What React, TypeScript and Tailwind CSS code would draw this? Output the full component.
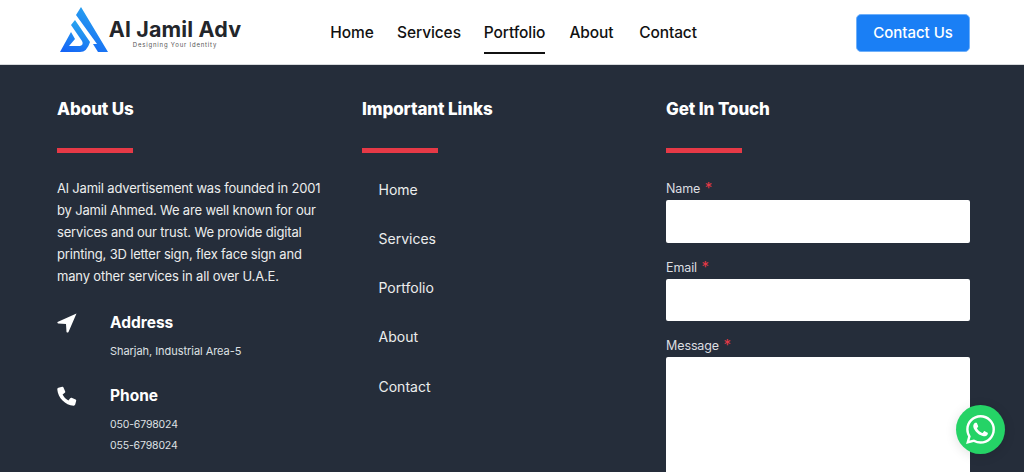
import React from "react";

const head = "font-['Inter',sans-serif] font-extrabold text-[17px] tracking-[-0.1px] leading-[24px] text-white";
const body = "font-['Inter',sans-serif]";

function Logo() {
  return (
    <svg width="60" height="56" viewBox="0 0 60 56" className="shrink-0">
      <defs>
        <linearGradient id="lg" x1="0.6" y1="0" x2="0.2" y2="1">
          <stop offset="0" stopColor="#2aa8ee" />
          <stop offset="1" stopColor="#1464f6" />
        </linearGradient>
      </defs>
      <g fill="url(#lg)">
        <path d="M26 3 L53 48 H43 L38 40 H42 L21 11 Z" />
        <path d="M20 16 L35 38 Q32 48 25 48 H5 L16 28 L20 35 L14 42 H25 Q29 41 27 37 L16 21 Z" />
      </g>
    </svg>
  );
}

function Header() {
  const items = [
    { t: "Home", w: "w-[44px]" },
    { t: "Services", w: "w-[62px]" },
    { t: "Portfolio", w: "w-[61px]" },
    { t: "About", w: "w-[45px]" },
    { t: "Contact", w: "w-[60px]" },
  ];
  return (
    <header className="h-[65px] bg-white border-b border-[#d8dadd] flex items-start pl-[55px] pr-[54px]">
      <div className="w-[275px] flex items-start">
        <div className="mt-[4px] w-[54px]"><Logo /></div>
        <div className="flex flex-col items-center mt-[17px] w-[132px]">
          <span className="font-['Inter',sans-serif] font-bold text-[21.5px] leading-[24px] text-[#23262b] tracking-[0.15px] whitespace-nowrap">Al Jamil Adv</span>
          <span className="font-['Inter',sans-serif] text-[6px] leading-[8px] tracking-[0.8px] text-[#555] whitespace-nowrap">Designing Your Identity</span>
        </div>
      </div>
      <nav className="flex gap-[24px] items-start">
        {items.map(({ t, w }) => (
          <a
            key={t}
            className={`flex items-center justify-center ${w} h-[54px] pt-[14px] font-['Inter',sans-serif] font-medium text-[15.5px] tracking-[-0.1px] text-[#111] whitespace-nowrap border-b-2 ${t === "Portfolio" ? "border-[#111]" : "border-transparent"}`}
          >
            {t}
          </a>
        ))}
      </nav>
      <a className="ml-auto mt-[14px] w-[114px] h-[38px] rounded-[5px] bg-[#1a7ff5] border border-[#6fb0fa] text-white flex items-center justify-center font-['Inter',sans-serif] font-medium text-[15px] whitespace-nowrap">
        Contact Us
      </a>
    </header>
  );
}

function ColHead({ children }: { children: React.ReactNode }) {
  return (
    <div>
      <h3 className={head}>{children}</h3>
      <div className="mt-[27px] w-[76px] h-[5px] bg-[#e63946]" />
    </div>
  );
}

function Field({ label, tall }: { label: string; tall?: boolean }) {
  return (
    <div>
      <div className={`${body} text-[12.5px] tracking-[-0.1px] leading-[20px] text-[#dcdee1]`}>
        {label} <span className="ml-[1px] text-[#e63946] text-[15px] leading-[14px]">*</span>
      </div>
      <div className={`bg-white rounded-[2px] mt-[1px] ${tall ? "h-[160px]" : "h-[42.5px]"}`} />
    </div>
  );
}

export default function App() {
  return (
    <div className="w-[1024px] h-[472px] overflow-hidden relative bg-[#252d3a]">
      <Header />
      <main className="grid grid-cols-[305px_304px_304px] pl-[57px] pt-[32px]">
        <section>
          <ColHead>About Us</ColHead>
          <p className={`${body} mt-[24px] w-[272px] text-[13px] tracking-[-0.17px] leading-[22px] text-[#eceded]`}>
            Al Jamil advertisement was founded in 2001 by Jamil Ahmed. We are well known for our services and our trust. We provide digital printing, 3D letter sign, flex face sign and many other services in all over U.A.E.
          </p>
          <div className="mt-[25px] flex">
            <div className="w-[53px] pt-[1px]">
              <svg width="20" height="20" viewBox="0 0 20 20"><path d="M19.5 0.5 L0.5 9 Q0 10.2 1.2 10.6 L9 11 L9.5 19 Q10.5 20 11.5 19 Z" fill="#fff" /></svg>
            </div>
            <div>
              <div className={`${body} font-bold text-[15.5px] leading-[22px] text-white`}>Address</div>
              <div className={`${body} mt-[7px] text-[11px] tracking-[-0.05px] leading-[20px] text-[#dfe1e4]`}>Sharjah, Industrial Area-5</div>
            </div>
          </div>
          <div className="mt-[24px] flex">
            <div className="w-[53px] pt-[1px]">
              <svg width="20" height="20" viewBox="0 0 20 20"><path d="M5.2 0.8 L1.4 1.8 Q0.2 2.2 0.3 3.4 C0.9 11.7 8.3 19.1 16.6 19.7 Q17.8 19.8 18.2 18.6 L19.2 14.8 Q19.4 13.9 18.6 13.5 L14.6 11.8 Q13.8 11.5 13.2 12.2 L11.4 14.4 C8.7 13.1 6.9 11.3 5.6 8.6 L7.8 6.8 Q8.5 6.2 8.2 5.4 L6.5 1.4 Q6.1 0.6 5.2 0.8 Z" fill="#fff" /></svg>
            </div>
            <div>
              <div className={`${body} font-bold text-[15.5px] leading-[22px] text-white`}>Phone</div>
              <div className={`${body} mt-[7px] text-[10.5px] tracking-[-0.15px] leading-[21px] text-[#dfe1e4]`}>050-6798024</div>
              <div className={`${body} text-[10.5px] tracking-[-0.15px] leading-[21px] text-[#dfe1e4]`}>055-6798024</div>
            </div>
          </div>
        </section>
        <section>
          <ColHead>Important Links</ColHead>
          <ul className="mt-[11.5px] pl-[16.5px]">
            {["Home", "Services", "Portfolio", "About", "Contact"].map((t) => (
              <li key={t} className={`${body} h-[49.25px] flex items-center text-[14px] text-[#eceded]`}>{t}</li>
            ))}
          </ul>
        </section>
        <section>
          <ColHead>Get In Touch</ColHead>
          <div className="mt-[26px] flex flex-col gap-[15px]">
            <Field label="Name" />
            <Field label="Email" />
            <Field label="Message" tall />
          </div>
        </section>
      </main>
      <div className="absolute left-[956px] top-[405px] w-[49px] h-[49px] rounded-full bg-[#25d366] flex items-center justify-center shadow-[0_2px_12px_rgba(0,0,0,0.12)]">
        <svg width="29" height="29" viewBox="0 0 24 24" fill="#fff">
          <path d="M17.472 14.382c-.297-.149-1.758-.867-2.03-.967-.273-.099-.471-.148-.67.15-.197.297-.767.966-.94 1.164-.173.199-.347.223-.644.075-.297-.15-1.255-.463-2.39-1.475-.883-.788-1.48-1.761-1.653-2.059-.173-.297-.018-.458.13-.606.134-.133.298-.347.446-.52.149-.174.198-.298.298-.497.099-.198.05-.371-.025-.52-.075-.149-.669-1.612-.916-2.207-.242-.579-.487-.5-.669-.51-.173-.008-.371-.01-.57-.01-.198 0-.52.074-.792.372-.272.297-1.04 1.016-1.04 2.479 0 1.462 1.065 2.875 1.213 3.074.149.198 2.096 3.2 5.077 4.487.709.306 1.262.489 1.694.625.712.227 1.36.195 1.871.118.571-.085 1.758-.719 2.006-1.413.248-.694.248-1.289.173-1.413-.074-.124-.272-.198-.57-.347m-5.421 7.403h-.004a9.87 9.87 0 01-5.031-1.378l-.361-.214-3.741.982.998-3.648-.235-.374a9.86 9.86 0 01-1.51-5.26c.001-5.45 4.436-9.884 9.888-9.884 2.64 0 5.122 1.03 6.988 2.898a9.825 9.825 0 012.893 6.994c-.003 5.45-4.437 9.884-9.885 9.884m8.413-18.297A11.815 11.815 0 0012.05 0C5.495 0 .16 5.335.157 11.892c0 2.096.547 4.142 1.588 5.945L.057 24l6.305-1.654a11.882 11.882 0 005.683 1.448h.005c6.554 0 11.89-5.335 11.893-11.893a11.821 11.821 0 00-3.48-8.413z" />
        </svg>
      </div>
    </div>
  );
}
